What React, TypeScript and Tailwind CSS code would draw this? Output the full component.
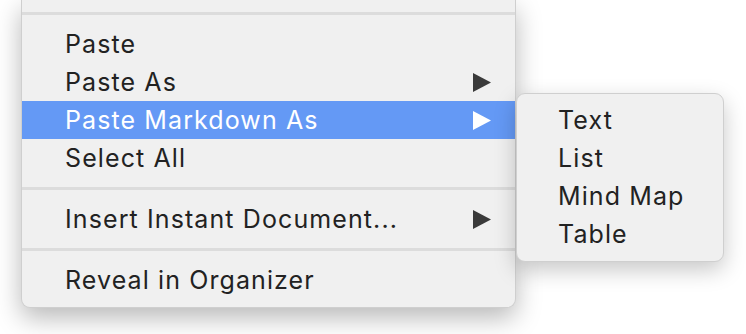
import React from "react";

type Item = { label: string; arrow?: boolean; active?: boolean } | "sep";

const mainItems: Item[] = [
  "sep",
  { label: "Paste" },
  { label: "Paste As", arrow: true },
  { label: "Paste Markdown As", arrow: true, active: true },
  { label: "Select All" },
  "sep",
  { label: "Insert Instant Document...", arrow: true },
  "sep",
  { label: "Reveal in Organizer" },
];

const subItems = ["Text", "List", "Mind Map", "Table"];

const Arrow = ({ white }: { white?: boolean }) => (
  <svg width="18" height="19" viewBox="0 0 18 19" className="shrink-0">
    <polygon points="0,0 18,9.5 0,19" fill={white ? "#ffffff" : "#3a3a3a"} />
  </svg>
);

const App = () => {
  return (
    <div
      className="relative w-[746px] h-[334px] overflow-hidden bg-white"
      style={{ fontFamily: "Inter, 'Noto Sans', sans-serif" }}
    >
      <div className="flex items-start pl-[21px]">
        {/* MAIN MENU */}
        <div className="w-[495px] bg-[#f0f0f0] rounded-b-[9px] border-x border-b border-[#cfcfcf] shadow-[0_10px_26px_rgba(0,0,0,0.28)] pb-2 text-[25px] tracking-[1.1px] text-[#222222]">
          {mainItems.map((it, i) =>
            it === "sep" ? (
              <div key={i} className={i === 0 ? "pt-[12px] pb-[10px]" : "py-[10px]"}>
                <div className="h-[3px] bg-[#dcdcdc]" />
              </div>
            ) : (
              <div
                key={i}
                className={`h-[38px] flex items-center justify-between pl-[43px] pr-6 pt-px ${
                  it.active ? "bg-[#6499f5] text-white" : ""
                }`}
              >
                <span>{it.label}</span>
                {it.arrow && <Arrow white={it.active} />}
              </div>
            )
          )}
        </div>

        {/* SUBMENU */}
        <div className="mt-[93px] w-[208px] bg-[#f0f0f0] rounded-[9px] border border-[#cfcfcf] shadow-[0_8px_22px_rgba(0,0,0,0.22)] pt-[7px] pb-2 text-[25px] tracking-[1.1px] text-[#222222]">
          {subItems.map((s) => (
            <div key={s} className="h-[38px] flex items-center pl-[41px] pt-px">
              {s}
            </div>
          ))}
        </div>
      </div>
    </div>
  );
};

export default App;
